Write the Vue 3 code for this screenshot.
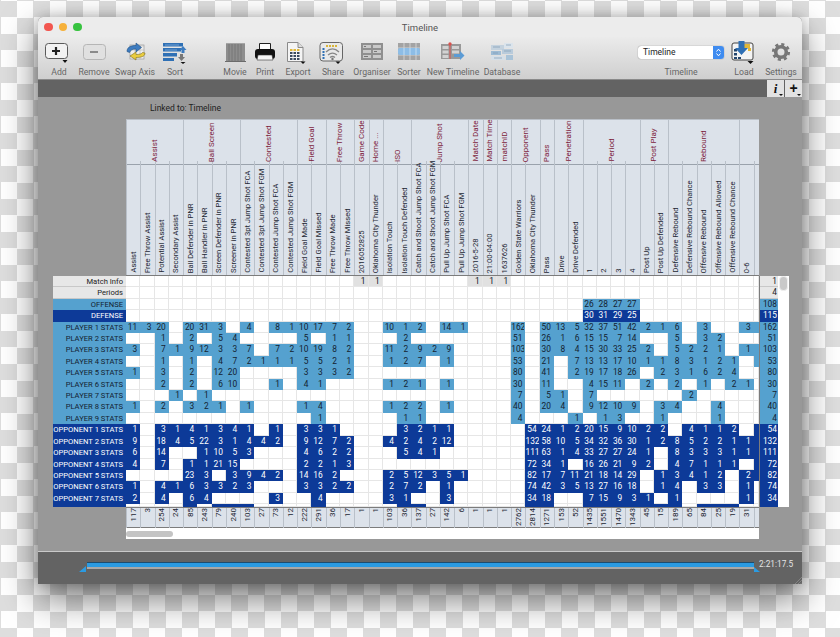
<script setup>
const groups = [
  ['Assist', 4], ['Ball Screen', 4], ['Contested', 4], ['Field Goal', 2], ['Free Throw', 2],
  ['Game Code', 1], ['Home ...', 1], ['ISO', 2], ['Jump Shot', 4], ['Match Date', 1], ['Match Time', 1],
  ['matchID', 1], ['Opponent', 2], ['Pass', 1], ['Penetration', 2], ['Period', 4], ['Post Play', 2],
  ['Rebound', 5], ['', 2]
]
const names = ['Assist', 'Free Throw Assist', 'Potential Assist', 'Secondary Assist', 'Ball Defender in PNR',
  'Ball Handler in PNR', 'Screen Defender in PNR', 'Screener in PNR', 'Contested 3pt Jump Shot FCA',
  'Contested 3pt Jump Shot FGM', 'Contested Jump Shot FCA', 'Contested Jump Shot FGM', 'Field Goal Made',
  'Field Goal Missed', 'Free Throw Made', 'Free Throw Missed', '2016052825', 'Oklahoma City Thunder',
  'Isolation Touch', 'Isolation Touch Defended', 'Catch and Shoot Jump Shot FCA', 'Catch and Shoot Jump Shot FGM',
  'Pull Up Jump Shot FCA', 'Pull Up Jump Shot FGM', '2016-5-28', '21:00-04:00', '1637626', 'Golden State Warriors',
  'Oklahoma City Thunder', 'Pass', 'Drive', 'Drive Defended', '1', '2', '3', '4', 'Post Up', 'Post Up Defended',
  'Defensive Rebound', 'Defensive Rebound Chance', 'Offensive Rebound', 'Offensive Rebound Allowed',
  'Offensive Rebound Chance', '0-6', '']
const footer = [117, 3, 254, 24, 85, 243, 79, 240, 103, 27, 73, 12, 222, 291, 36, 17, 1, 1, 103, 36, 137, 27, 142, 6,
  1, 1, 1, 2762, 2814, 1271, 153, 52, 1435, 1551, 1470, 1343, 45, 15, 189, 65, 84, 25, 19, 31, '']

const source = [
  ['Match Info', 'info', '17:1 18:1 25:1 26:1 27:1', 1, false],
  ['Periods', 'info', '', 4, false],
  ['OFFENSE', 'light', '33:26 34:28 35:27 36:27', 108, false],
  ['DEFENSE', 'dark', '33:30 34:31 35:29 36:25', 115, false],
  ['PLAYER 1 STATS', 'light', '1:11 2:3 3:20 5:20 6:31 7:3 9:4 11:8 12:1 13:10 14:17 15:7 16:2 19:10 20:1 21:2 23:14 24:1 28:162 30:50 31:13 32:5 33:32 34:37 35:51 36:42 37:2 38:1 39:6 41:3 44:3', 162, true],
  ['PLAYER 2 STATS', 'light', '3:1 5:2 7:5 8:4 13:5 15:1 16:1 20:2 28:51 30:26 31:1 32:6 33:15 34:15 35:7 36:14 39:5 41:3 42:2', 51, false],
  ['PLAYER 3 STATS', 'light', '1:3 3:7 4:1 5:9 6:12 7:3 8:3 9:7 11:7 12:2 13:10 14:19 15:8 16:2 19:11 20:2 21:9 22:2 23:9 28:103 30:30 31:8 32:4 33:15 34:30 35:33 36:25 37:2 39:5 40:2 41:2 42:1 44:1', 103, true],
  ['PLAYER 4 STATS', 'light', '3:1 5:1 7:4 8:7 9:2 10:1 11:1 12:1 13:5 14:5 15:2 16:1 19:1 20:2 21:7 23:1 28:53 30:21 32:7 33:13 34:13 35:17 36:10 37:1 38:1 39:8 40:3 41:1 42:2 43:1', 53, true],
  ['PLAYER 5 STATS', 'light', '1:1 3:3 5:2 7:12 8:20 13:3 14:3 15:3 16:2 28:80 30:41 32:2 33:19 34:17 35:18 36:26 38:2 39:3 40:1 41:6 42:2 43:4', 80, false],
  ['PLAYER 6 STATS', 'light', '3:2 5:2 7:6 8:10 11:1 13:4 14:1 19:1 20:2 21:1 23:1 28:30 30:11 33:4 34:15 35:11 37:2 39:2 41:1 43:2 44:1', 30, false],
  ['PLAYER 7 STATS', 'light', '4:1 6:1 28:7 30:5 31:1 33:7 40:2', 7, false],
  ['PLAYER 8 STATS', 'light', '1:1 3:2 5:3 6:2 7:1 9:1 13:1 14:4 19:1 20:2 21:2 23:1 28:40 30:20 31:4 33:9 34:12 35:10 36:9 38:3 39:4 42:4', 40, false],
  ['PLAYER 9 STATS', 'light', '14:1 20:1 21:1 28:4 32:1 34:1 35:3 38:1 42:1', 4, false],
  ['OPPONENT 1 STATS', 'dark', '1:1 3:3 4:1 5:4 6:1 7:3 8:4 9:1 11:1 13:3 14:3 15:1 20:3 21:2 22:1 23:1 29:54 30:24 31:1 32:2 33:20 34:15 35:9 36:10 37:2 38:2 40:4 41:1 42:1 43:2', 54, true],
  ['OPPONENT 2 STATS', 'dark', '1:9 3:18 4:4 5:5 6:22 7:3 8:1 9:4 10:4 11:2 13:9 14:12 15:7 16:2 19:4 20:2 21:4 22:2 23:12 29:132 30:58 31:10 32:5 33:34 34:32 35:36 36:30 37:1 38:2 39:8 40:5 41:2 42:2 43:1 44:1', 132, true],
  ['OPPONENT 3 STATS', 'dark', '1:6 3:14 6:1 7:10 8:5 9:3 13:4 14:6 15:2 16:2 20:5 21:4 22:1 29:111 30:63 31:1 32:4 33:33 34:27 35:27 36:24 37:1 39:8 40:3 41:3 42:3 43:1 44:1', 111, true],
  ['OPPONENT 4 STATS', 'dark', '1:4 3:7 5:1 6:1 7:21 8:15 13:2 14:2 15:1 16:3 29:72 30:34 31:1 33:16 34:26 35:21 36:9 37:2 39:4 40:7 41:1 42:1 43:1', 72, true],
  ['OPPONENT 5 STATS', 'dark', '5:23 6:3 8:3 9:9 10:4 11:2 13:14 14:16 15:2 19:2 20:5 21:12 22:3 23:5 24:1 29:82 30:17 31:7 32:11 33:21 34:18 35:14 36:29 38:1 39:3 40:4 41:1 42:2 44:2', 82, true],
  ['OPPONENT 6 STATS', 'dark', '1:1 3:4 4:1 5:6 6:3 7:3 8:2 9:3 13:3 14:3 15:2 16:2 19:2 20:7 21:2 23:1 29:74 30:42 31:3 32:5 33:13 34:27 35:16 36:18 38:1 39:4 41:3 42:3 44:1', 74, false],
  ['OPPONENT 7 STATS', 'dark', '1:2 3:4 5:6 6:4 11:3 14:4 19:3 20:1 23:3 29:34 30:18 33:7 34:15 35:9 36:3 37:1 39:1 44:1', 34, false],
  ['', 'dark', '5: 7: 8: 9: 14: 20: 21: 29: 30: 33: 34: 35: 36: 37: 38: 39: 41: 42: 43:', '', false]
]

const rows = source.map(([label, kind, sparse, total, tail], index) => {
  const map = {}
  sparse.split(' ').filter(Boolean).forEach((part) => {
    const [col, value] = part.split(':')
    map[col] = value
  })
  const cells = []
  for (let c = 1; c <= 44; c++) {
    cells.push({ filled: c in map, value: map[c] || '' })
  }
  cells.push({ filled: tail, value: '' })
  return { label, kind, cells, total, stub: index === source.length - 1 }
})
</script>

<template>
  <div class="page">
    <div class="window">
      <header class="titlebar">
        <span class="dot red"></span><span class="dot amber"></span><span class="dot green"></span>
        <span class="title">Timeline</span>
      </header>

      <div class="toolbar">
        <div class="tool w34">
          <svg class="icon" viewBox="0 0 28 24"><rect x="0.5" y="3.500" width="22" height="15" rx="3" fill="#f2f2f2" stroke="#5a5a5a"/><path d="M11 7v8M7 11h8" stroke="#222" stroke-width="2.200"/><path d="M17.500 20h5l-2.500 3z" fill="#111"/></svg>
          <span>Add</span>
        </div>
        <div class="tool w36">
          <svg class="icon" viewBox="0 0 28 24"><rect x="3.500" y="4.500" width="22" height="15" rx="3" fill="#e0e0e0" stroke="#b5b5b5"/><path d="M10 12h8" stroke="#8a8a8a" stroke-width="2"/></svg>
          <span>Remove</span>
        </div>
        <div class="tool w46">
          <svg class="icon" viewBox="0 0 28 24"><rect x="9" y="5" width="14" height="14" fill="#eee" stroke="#9a9a9a" stroke-width=".7"/><path d="M9 6h14M9 10h14M14 5v14M19 5v14" stroke="#b5b5b5" stroke-width=".6"/><path d="M6 11.500C6 7 10 5.500 15 5.500V3l5.500 4.500L15 12V9c-3.500 0-5.500 1-6.500 3.500z" fill="#3d7cc0" stroke="#1f4d80" stroke-width=".6"/><path d="M24 13c0 3.500-4 4.500-9 4.500V20l-6-4 6-4v2.500c3.500 0 5.500-.5 6.500-2z" fill="#e9cc3f" stroke="#7c6b1c" stroke-width=".6"/></svg>
          <span>Swap Axis</span>
        </div>
        <div class="tool w34">
          <svg class="icon" viewBox="0 0 28 24"><path d="M2 3h20v3.500H2zM2 8h18v3.500H2zM2 13h14v3.500H2zM2 18h11v3H2z" fill="#2f70b5"/><path d="M4 5h14M4 10h12" stroke="#9cc4e8" stroke-width=".6"/><path d="M22 6l3.500 4H23.500v3h-3v-3h-2z" fill="#3d7cc0"/><path d="M19 14h3v3h2l-3.500 4-3.500-4h2z" fill="#777"/><path d="M19.500 22h5l-2.500 2z" fill="#111"/></svg>
          <span>Sort</span>
        </div>

        <div class="tool w34 after-gap">
          <svg class="icon" viewBox="0 0 28 24"><rect x="5" y="3" width="19" height="18" fill="#8d8d8d"/><path d="M8 3v18M11 3v18M14 3v18M17 3v18M20 3v18" stroke="#777" stroke-width="1"/><path d="M4 21.500h21" stroke="#6b6b6b" stroke-width="1"/><path d="M5 3.500h19" stroke="#a5a5a5"/></svg>
          <span>Movie</span>
        </div>
        <div class="tool w26">
          <svg class="icon" viewBox="0 0 28 24"><path d="M8.500 10V3.500h11V10" fill="#fff" stroke="#222"/><rect x="4" y="9" width="20" height="10" rx="3" fill="#111"/><path d="M7 15h14l1 5H6z" fill="#f5f5f5" stroke="#333" stroke-width=".6"/></svg>
          <span>Print</span>
        </div>
        <div class="tool w40">
          <svg class="icon" viewBox="0 0 28 24"><path d="M3.500 2.500H14l5 5v14H3.500z" fill="#f4f4f4" stroke="#8a8a8a"/><path d="M14 2.500v5h5" fill="#ddd" stroke="#8a8a8a"/><path d="M6 9h2.500v2H6zM9.500 9H12v2H9.500zM13 9h2.500v2H13z" fill="#e0b83a"/><path d="M6 12h2.500v2H6zM9.500 12H12v2H9.500zM13 12h2.500v2H13zM6 15h2.500v2H6zM9.500 15H12v2H9.500zM13 15h2.500v2H13zM6 18h2.500v2H6zM9.500 18H12v2H9.500zM13 18h2.500v2H13z" fill="#3b4a5e"/><path d="M16.500 21.500h5l-2.500 2.500z" fill="#111"/></svg>
          <span>Export</span>
        </div>
        <div class="tool w30">
          <svg class="icon" viewBox="0 0 28 24"><rect x="1" y="2.500" width="22.500" height="18.500" rx="3" fill="#e9e9e9" stroke="#666"/><path d="M7 5h2v2H7zM10 5h2v2h-2zM13 5h2v2h-2zM16 5h2v2h-2z" fill="#d8b53a"/><path d="M3.500 8h2v2h-2zM3.500 11h2v2h-2zM3.500 14h2v2h-2zM3.500 17h2v2h-2z" fill="#2f70b5"/><path d="M7 12c4-4 9-4 13 0M9 15c3-2.500 6-2.500 9 0M11 17.500c1.500-1.200 3.500-1.200 5 0" fill="none" stroke="#888" stroke-width="1.300"/><circle cx="13.500" cy="19" r="1.200" fill="#777"/><path d="M16.500 21.500h5l-2.500 2.500z" fill="#111"/></svg>
          <span>Share</span>
        </div>
        <div class="tool w48">
          <svg class="icon" viewBox="0 0 28 24"><rect x="3" y="3" width="22" height="17" fill="#8f8f8f"/><path d="M5 5h8v3H5zM15 5h8v3h-8zM5 10h8v3H5zM15 10h8v3h-8zM5 15h8v3H5zM15 15h8v3h-8z" fill="#c9c9c9"/><path d="M6 6h2v1H6zM16 11h3v1h-3zM6 16h4v1H6z" fill="#777"/></svg>
          <span>Organiser</span>
        </div>
        <div class="tool w26">
          <svg class="icon" viewBox="0 0 28 24"><rect x="3" y="3" width="22" height="17" fill="#a3a3a3"/><path d="M9 3v17M15 3v17M21 3v17M3 8h22M3 15h22" stroke="#d0d0d0"/><rect x="3" y="8" width="22" height="7" rx="2" fill="#8dbde6"/><path d="M9 8v7M15 8v7M21 8v7" stroke="#c2ddf3"/></svg>
          <span>Sorter</span>
        </div>
        <div class="tool w62">
          <svg class="icon" viewBox="0 0 28 24"><rect x="2" y="4" width="20" height="15" fill="#999"/><path d="M3.500 6h6v3h-6zM3.500 10.500h6v3h-6zM3.500 15h6v3h-6zM13 6h7v3h-7zM13 10.500h7v3h-7z" fill="#d2d2d2"/><path d="M11 4v15" stroke="#d8534f" stroke-width="1"/><circle cx="11" cy="4" r="1.700" fill="#d8534f"/><path d="M15 14h6v-3l4.500 4.500L21 20v-3h-6z" fill="#5b9bd5"/></svg>
          <span>New Timeline</span>
        </div>
        <div class="tool w36">
          <svg class="icon" viewBox="0 0 28 24"><rect x="3" y="5" width="13" height="5" fill="#c4d2de"/><rect x="16" y="3" width="9" height="5" fill="#dbe4ec"/><rect x="3" y="11" width="10" height="4" fill="#9dbbd4"/><rect x="14" y="9" width="11" height="5" fill="#b9cbdb"/><rect x="3" y="16" width="14" height="4" fill="#d5dfe8"/><rect x="18" y="15" width="7" height="5" fill="#a9c3d8"/><path d="M5 7h7M18 5h5M5 13h5M16 11h7M6 18h8" stroke="#7f9cb5" stroke-width=".7"/></svg>
          <span>Database</span>
        </div>

        <div class="tool w86 picker">
          <div class="select"><b>Timeline</b><i><svg viewBox="0 0 11 13"><path d="M3.500 5.500l2-2.300 2 2.300M3.500 7.500l2 2.300 2-2.300" fill="none" stroke="#fff" stroke-width="1"/></svg></i></div>
          <span>Timeline</span>
        </div>
        <div class="tool w40">
          <svg class="icon" viewBox="0 0 28 24"><rect x="2" y="3" width="21" height="17" rx="2" fill="#f4f4f4" stroke="#444"/><path d="M14 4h6v4h-6zM18 8h3v3h-3z" fill="#e0b83a"/><path d="M4 9h3v2.500H4zM4 13h3v2.500H4zM4 17h3v2H4zM8 17h3v2H8z" fill="#23466e"/><path d="M8.500 1h6v7h3.500l-6.500 7-6.500-7h3.500z" fill="#2f70b5"/><path d="M17.500 21h6l-3 3z" fill="#111"/></svg>
          <span>Load</span>
        </div>
        <div class="tool w34">
          <svg class="icon" viewBox="0 0 28 24"><circle cx="14" cy="12" r="5.300" fill="none" stroke="#777" stroke-width="3.600"/><circle cx="14" cy="12" r="7.700" fill="none" stroke="#777" stroke-width="2.800" stroke-dasharray="3.050 3" /></svg>
          <span>Settings</span>
        </div>
      </div>

      <div class="strip">
        <button class="mini"><em>i</em><u></u></button>
        <button class="mini plus"><strong>+</strong><u></u></button>
      </div>

      <main class="sheet">
        <div class="linked">Linked to: Timeline</div>

        <div class="head">
          <div class="head-groups">
            <div v-for="g in groups" :key="g[0] + g[1]" class="group" :class="'span' + g[1]"><span>{{ g[0] }}</span></div>
          </div>
          <div class="head-names">
            <div v-for="(n, i) in names" :key="i" class="name"><span>{{ n }}</span></div>
          </div>
        </div>

        <div class="body">
          <div class="labels">
            <div v-for="(r, i) in rows" :key="i" class="label" :class="[r.kind, { stub: r.stub }]">{{ r.label }}</div>
          </div>
          <div class="grid">
            <template v-for="(r, i) in rows" :key="i">
              <div v-for="(c, j) in r.cells" :key="j" class="cell" :class="c.filled ? r.kind : ''">{{ c.value }}</div>
            </template>
          </div>
          <div class="totals">
            <div v-for="(r, i) in rows" :key="i" class="total" :class="[r.kind, { stub: r.stub }]">{{ r.total }}</div>
          </div>
          <div class="vbar"><div class="vthumb"></div></div>
        </div>

        <div class="foot">
          <div v-for="(f, i) in footer" :key="i" class="foot-cell"><span>{{ f }}</span></div>
        </div>
        <div class="hbar"><div class="hthumb"></div></div>
      </main>

      <footer class="timeline">
        <div class="track">
          <i class="grab left"></i>
          <div class="line"></div>
          <i class="grab right"></i>
          <span class="time">2:21:17.5</span>
        </div>
        <svg class="grip" viewBox="0 0 7 7"><path d="M0 7l7-7M3 7l4-4M5.500 7l1.500-1.500" stroke="#8c8c8c" stroke-width=".8"/></svg>
      </footer>
    </div>
  </div>
</template>

<style>
html, body { margin: 0; background: #fff; }
</style>

<style scoped>
.page {
  width: 840px;
  height: 637px;
  overflow: hidden;
  box-sizing: border-box;
  padding: 17px 38px 0;
  background-color: #fff;
  background-image: conic-gradient(#dedede 25%, #fff 0 50%, #dedede 0 75%, #fff 0);
  background-size: 33px 33px;
  background-position: 17px 1px;
  font-family: Roboto, "Liberation Sans", sans-serif;
}
.window {
  width: 764px;
  height: 567px;
  display: flex;
  flex-direction: column;
  border-radius: 5px 5px 0 0;
  box-shadow: 0 14px 36px rgba(0, 0, 0, .55), 0 0 12px rgba(0, 0, 0, .2);
  background: #636363;
}

.titlebar {
  height: 20px;
  flex: none;
  display: flex;
  align-items: center;
  gap: 6px;
  padding-left: 6px;
  position: relative;
  border-radius: 5px 5px 0 0;
  background: #ececec;
}
.dot { width: 8.500px; height: 8.500px; border-radius: 50%; }
.red { background: #f2564f; }
.amber { background: #f6b13a; }
.green { background: #37c33f; }
.title {
  position: absolute;
  left: 0;
  right: 0;
  text-align: center;
  font-size: 9.500px;
  color: #555;
}

.toolbar {
  height: 43px;
  flex: none;
  box-sizing: border-box;
  padding: 3px 0 0 4px;
  display: flex;
  background: linear-gradient(#ebebeb, #cfcfcf);
  border-bottom: 1px solid #8a8a8a;
}
.tool {
  display: flex;
  flex-direction: column;
  align-items: center;
  flex: none;
}
.tool > span {
  margin-top: 2px;
  font-size: 8.700px;
  line-height: 12px;
  color: #666;
  white-space: nowrap;
}
.icon { width: 28px; height: 24px; display: block; flex: none; }
.w26 { width: 26px; }
.w30 { width: 30px; }
.w34 { width: 34px; }
.w36 { width: 36px; }
.w40 { width: 40px; }
.w46 { width: 46px; }
.w48 { width: 48px; }
.w62 { width: 62px; }
.w86 { width: 86px; }
.after-gap { margin-left: 26px; }
.picker { margin-left: 118px; }
.select {
  height: 13px;
  width: 86px;
  margin: 6px 0 5px;
  display: flex;
  justify-content: space-between;
  background: #fff;
  border-radius: 3px;
  box-shadow: 0 0 1px rgba(0, 0, 0, .6);
}
.select b { font-weight: 400; font-size: 8.500px; line-height: 13px; margin-left: 5px; color: #222; }
.select i { width: 11px; height: 13px; background: #3f8cf0; border-radius: 0 3px 3px 0; }
.select svg { display: block; width: 11px; height: 13px; }

.strip {
  height: 17px;
  flex: none;
  display: flex;
  justify-content: flex-end;
  gap: 1px;
  background: #636363;
}
.mini {
  width: 17px;
  height: 17px;
  padding: 0;
  border: 0;
  position: relative;
  background: #e2e2e2;
  color: #111;
  line-height: 15px;
}
.mini em { font: italic 700 13px/15px "Liberation Serif", serif; }
.mini strong { font: 700 14px/15px "Liberation Sans", sans-serif; }
.mini u {
  position: absolute;
  right: 1px;
  bottom: 1px;
  border-left: 2px solid transparent;
  border-right: 2px solid transparent;
  border-top: 2px solid #111;
}

.sheet {
  flex: 1;
  min-height: 0;
  padding-left: 15px;
  background: #989898;
}
.linked {
  height: 22px;
  padding: 5px 0 0 97px;
  box-sizing: border-box;
  font-size: 8.500px;
  line-height: 12px;
  color: #222;
}

.head { margin-left: 73px; width: 633px; background: #dce2ea; }
.head-groups, .head-names, .foot {
  display: grid;
  grid-template-columns: repeat(44, 14.270px) 5px;
}
.head-groups { height: 42px; border-top: 1px solid #b9bfc7; box-sizing: border-box; }
.head-names { height: 115px; border-bottom: 1px solid #7c7c7c; box-sizing: border-box; }
.group, .name, .foot-cell {
  box-sizing: border-box;
  display: flex;
  justify-content: center;
  border-left: 1px solid #b9c0c9;
  min-width: 0;
}
.group { align-items: flex-end; border-bottom: 1px solid #9aa2ac; color: #7d1c3b; }
.name { align-items: flex-end; color: #1d2733; }
.group span, .name span, .foot-cell span {
  writing-mode: vertical-rl;
  transform: rotate(180deg);
  white-space: nowrap;
  font-size: 7.600px;
  line-height: 14px;
  padding-top: 1.500px;
}
.group span { font-size: 8px; }
.span1 { grid-column: span 1; }
.span2 { grid-column: span 2; }
.span4 { grid-column: span 4; }
.span5 { grid-column: span 5; }

.body { display: flex; height: 231.400px; }
.labels { width: 73px; flex: none; box-sizing: border-box; }
.label, .total {
  height: 11.420px;
  box-sizing: border-box;
  text-align: right;
  white-space: nowrap;
  font-size: 7.600px;
  line-height: 11px;
  padding-right: 3px;
  color: #1c2a3a;
}
.stub { height: 3px; overflow: hidden; }
.label.info, .total.info { background: #e7e7e7; border-bottom: 1px solid #c8c8c8; color: #222; }
.label.light, .total.light, .cell.light { background: #55a1cf; color: #14222f; }
.label.dark, .total.dark, .cell.dark { background: #0d3a98; color: #fff; }

.grid {
  width: 633px;
  flex: none;
  display: grid;
  grid-template-columns: repeat(44, 14.270px) 5px;
  grid-template-rows: repeat(20, 11.420px) 3px;
  background: #fff;
}
.cell {
  box-sizing: border-box;
  border-right: 1px solid #e6e6e6;
  border-bottom: 1px solid #e6e6e6;
  text-align: right;
  padding-right: 2px;
  font-size: 8.400px;
  line-height: 11px;
  overflow: hidden;
  color: #14222f;
}
.cell.light, .cell.dark { border-color: transparent; }
.cell:nth-child(-n + 45):not(:empty) { background: #e1e1e1; }

.totals { width: 18px; flex: none; background: #fff; border-left: 1px solid #7c7c7c; }
.total { font-size: 8.400px; padding-right: 1px; }
.vbar { width: 11px; flex: none; background: #fff; box-sizing: border-box; padding: 0 1px; }
.vthumb { height: 15px; border-radius: 4px; background: #c9c9c9; border: 1px solid #efefef; box-sizing: border-box; }

.foot { margin-left: 73px; width: 633px; height: 21px; box-sizing: border-box; background: #dce2ea; border-top: 1px solid #7c7c7c; border-bottom: 1px solid #7c7c7c; }
.foot-cell { align-items: flex-start; color: #1d2733; }
.foot-cell span { font-size: 8px; padding: 2px 0 0; }

.hbar { margin-left: 73px; width: 633px; height: 11px; background: #fff; box-sizing: border-box; padding-top: 3px; }
.hthumb { width: 47px; height: 6px; border-radius: 3px; background: #c4c4c4; }

.timeline {
  height: 33px;
  flex: none;
  box-sizing: border-box;
  position: relative;
  background: #636363;
  border-top: 1px solid #c9c9c9;
}
.track { position: relative; margin-left: 49px; width: 667px; padding-top: 10px; }
.line { height: 4px; background: #2b9be2; border-top: 1px solid #1d4d70; border-bottom: 2px solid #a9a9a9; }
.grab { position: absolute; top: 14px; width: 7px; height: 6px; background: #2b9be2; }
.grab.left { left: -8px; clip-path: polygon(100% 0, 100% 100%, 0 100%); }
.grab.right { right: -6px; top: 15px; width: 6px; height: 5px; clip-path: polygon(0 0, 0 100%, 100% 100%); }
.time { position: absolute; left: 672px; top: 6px; font-size: 8.300px; line-height: 12px; color: #e3e3e3; white-space: nowrap; }
.grip { position: absolute; right: 0; bottom: 0; width: 7px; height: 7px; }
</style>
